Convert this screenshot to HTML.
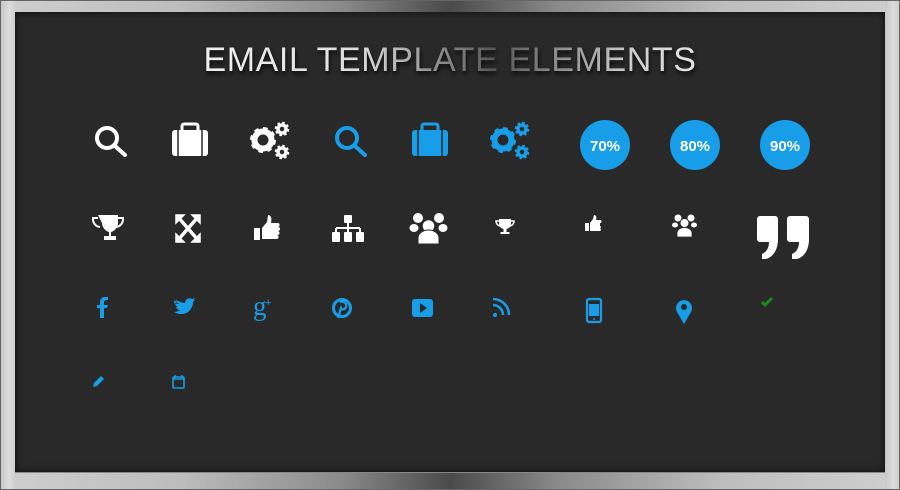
<!DOCTYPE html>
<html><head><meta charset="utf-8"><style>
html,body{margin:0;padding:0;width:900px;height:490px;overflow:hidden;background:#555}
.frame{position:absolute;left:0;top:0;width:900px;height:490px;
background:linear-gradient(90deg,#cfcfcf 0%,#bdbdbd 20%,#8a8a8a 38%,#4a4a4a 50%,#8a8a8a 62%,#bdbdbd 80%,#cfcfcf 100%);}
.frame:before{content:"";position:absolute;left:0;top:0;right:0;bottom:0;box-shadow:inset 0 0 0 1px #666;}
.side{position:absolute;top:1px;bottom:1px;width:14px;background:linear-gradient(90deg,#c8c8c8,#dcdcdc 60%,#cfcfcf)}
.panel{position:absolute;left:15px;top:12px;width:870px;height:460px;background:#292929;
box-shadow:inset 0 0 8px rgba(0,0,0,.7);border-bottom:1px solid #888}
.title{position:absolute;left:0;width:900px;top:41px;text-align:center;font-family:"Liberation Sans",sans-serif;
font-size:34px;letter-spacing:0.6px;font-weight:normal;
background:linear-gradient(90deg,#eee 25%,#ddd 40%,#555 55%,#ccc 70%,#eee 80%);-webkit-background-clip:text;background-clip:text;color:transparent;
filter:drop-shadow(1px 3px 2px rgba(0,0,0,.8))}
svg{position:absolute;left:0;top:0}
.pct{font-family:"Liberation Sans",sans-serif;font-weight:bold;font-size:15px;fill:#fff}
</style></head><body>
<div class="frame"><div class="side" style="left:1px"></div><div class="side" style="right:1px"></div></div>
<div class="panel"></div>
<div class="title">EMAIL TEMPLATE ELEMENTS</div>
<svg width="900" height="490" viewBox="0 0 900 490">
<!-- row 1 -->
<g fill="none" stroke="#fff" stroke-width="4" stroke-linecap="round"><circle cx="107" cy="138" r="10"/><line x1="115" y1="146" x2="125" y2="155"/></g>
<g fill="#fff"><rect x="172" y="130" width="36" height="26" rx="3"/><rect x="182" y="124" width="16" height="8" rx="2" fill="none" stroke="#fff" stroke-width="3"/></g>
<g stroke="#292929" stroke-width="1.5"><line x1="178" y1="130" x2="178" y2="156"/><line x1="202" y1="130" x2="202" y2="156"/></g>
<g>
<circle cx="263" cy="140" r="8.5" fill="none" stroke="#fff" stroke-width="6"/>
<circle cx="263" cy="140" r="11" fill="none" stroke="#fff" stroke-width="4" stroke-dasharray="4.3 4.3"/>
<circle cx="282" cy="129" r="4" fill="none" stroke="#fff" stroke-width="3.5"/>
<circle cx="282" cy="129" r="6" fill="none" stroke="#fff" stroke-width="2.5" stroke-dasharray="2.5 2.2"/>
<circle cx="282" cy="152" r="4" fill="none" stroke="#fff" stroke-width="3.5"/>
<circle cx="282" cy="152" r="6" fill="none" stroke="#fff" stroke-width="2.5" stroke-dasharray="2.5 2.2"/>
</g>
<g fill="none" stroke="#189ee8" stroke-width="4" stroke-linecap="round"><circle cx="347" cy="138" r="10"/><line x1="355" y1="146" x2="365" y2="155"/></g>
<g fill="#189ee8"><rect x="412" y="130" width="36" height="26" rx="3"/><rect x="422" y="124" width="16" height="8" rx="2" fill="none" stroke="#189ee8" stroke-width="3"/></g>
<g stroke="#292929" stroke-width="1.5"><line x1="418" y1="130" x2="418" y2="156"/><line x1="442" y1="130" x2="442" y2="156"/></g>
<g>
<circle cx="503" cy="140" r="8.5" fill="none" stroke="#189ee8" stroke-width="6"/>
<circle cx="503" cy="140" r="11" fill="none" stroke="#189ee8" stroke-width="4" stroke-dasharray="4.3 4.3"/>
<circle cx="522" cy="129" r="4" fill="none" stroke="#189ee8" stroke-width="3.5"/>
<circle cx="522" cy="129" r="6" fill="none" stroke="#189ee8" stroke-width="2.5" stroke-dasharray="2.5 2.2"/>
<circle cx="522" cy="152" r="4" fill="none" stroke="#189ee8" stroke-width="3.5"/>
<circle cx="522" cy="152" r="6" fill="none" stroke="#189ee8" stroke-width="2.5" stroke-dasharray="2.5 2.2"/>
</g>
<circle cx="605" cy="145" r="25" fill="#189ee8"/><text class="pct" x="605" y="151" text-anchor="middle">70%</text>
<circle cx="695" cy="145" r="25" fill="#189ee8"/><text class="pct" x="695" y="151" text-anchor="middle">80%</text>
<circle cx="785" cy="145" r="25" fill="#189ee8"/><text class="pct" x="785" y="151" text-anchor="middle">90%</text>
<!-- row 2 -->
<g fill="#fff">
<path d="M98 215h20v8a10 10 0 0 1-7 9v4h5v4h-12v-4h5v-4a10 10 0 0 1-7-9z"/>
<path d="M98 218h-5a8 8 0 0 0 7 9" fill="none" stroke="#fff" stroke-width="2"/>
<path d="M118 218h5a8 8 0 0 1-7 9" fill="none" stroke="#fff" stroke-width="2"/>
</g>
<g stroke="#fff" stroke-width="3.5" fill="#fff"><line x1="178" y1="217" x2="198" y2="240"/><line x1="198" y1="217" x2="178" y2="240"/>
<path d="M176 215h8l-8 8z M200 215h-8l8 8z M176 242h8l-8-8z M200 242h-8l8-8z" stroke-width="1.5"/></g>
<g fill="#fff"><rect x="254" y="228" width="6" height="12"/><path d="M262 228l5-6 1-7c3 0 4 3 3 8h6a2 2 0 0 1 1 4 2 2 0 0 1 0 4 2 2 0 0 1-1 4 2 2 0 0 1-1 4h-14z"/></g>
<g fill="#fff"><rect x="344" y="215" width="8" height="8" rx="1"/><path d="M348 223v5M336 228h24M336 228v4M348 228v4M360 228v4" stroke="#fff" stroke-width="2"/>
<rect x="332" y="232" width="8" height="10" rx="1"/><rect x="344" y="232" width="8" height="10" rx="1"/><rect x="356" y="232" width="8" height="10" rx="1"/></g>
<g fill="#fff"><circle cx="418" cy="218" r="5"/><circle cx="439" cy="218" r="5"/><ellipse cx="414" cy="228" rx="4.5" ry="4"/><ellipse cx="443" cy="228" rx="4.5" ry="4"/>
<circle cx="428.5" cy="226" r="6.5" stroke="#292929" stroke-width="1.5"/><path d="M418 244v-6a10.5 8 0 0 1 21 0v6z" stroke="#292929" stroke-width="1"/></g>
<g fill="#fff"><path d="M499 219h12v5a6 6 0 0 1-4.5 5v3h3v2h-9v-2h3v-3a6 6 0 0 1-4.5-5z"/><path d="M499 221h-3a5 5 0 0 0 4 5M511 221h3a5 5 0 0 1-4 5" fill="none" stroke="#fff" stroke-width="1.5"/></g>
<g fill="#fff"><rect x="585" y="223" width="4" height="8"/><path d="M590 223l3-4 1-4c2 0 3 2 2 5h4a1.5 1.5 0 0 1 0 3v3a1.3 1.3 0 0 1 0 2.5 1.3 1.3 0 0 1-1 2.5h-9z"/></g>
<g fill="#fff"><circle cx="678" cy="218" r="3.5"/><circle cx="691" cy="218" r="3.5"/><ellipse cx="675" cy="225" rx="3" ry="2.5"/><ellipse cx="694" cy="225" rx="3" ry="2.5"/>
<circle cx="684.5" cy="223" r="4.5" stroke="#292929" stroke-width="1"/><path d="M677 237v-4a7.5 5.5 0 0 1 15 0v4z" stroke="#292929" stroke-width="0.8"/></g>
<g fill="#fff"><path d="M760 216h15a3 3 0 0 1 3 3v20c0 11-5 18-12 20h-4v-5c5-2 7-7 7-12h-9a3 3 0 0 1-3-3v-20a3 3 0 0 1 3-3z"/>
<path d="M790 216h16a3 3 0 0 1 3 3v20c0 11-5 18-12 20h-5v-5c5-2 7-7 7-12h-9a3 3 0 0 1-3-3v-20a3 3 0 0 1 3-3z"/></g>
<!-- row 3 -->
<path d="M100 318v-10h-3v-3h3v-3c0-3 2-5 5-5h3v3h-2c-1 0-2 1-2 2v3h4l-1 3h-3v10z" fill="#189ee8"/>
<path d="M174 303c2 1 4 1 5 1-2-1-3-3-3-4 2 1 6 3 9 3 0-4 4-6 7-4 1 0 2-1 3-1-1 1-1 2-2 2h2l-2 2c0 7-6 13-13 12-2 0-4-1-6-2 2 0 5-1 6-2-2 0-3-1-4-3h2c-2-1-3-2-3-4h2c-1-1-2-2-2-4z" fill="#189ee8"/>
<text x="253" y="315" font-family="Liberation Serif,serif" font-size="27" fill="#189ee8">g</text><text x="265" y="306" font-family="Liberation Sans,sans-serif" font-size="11" fill="#189ee8">+</text>
<circle cx="342" cy="308" r="8.5" fill="none" stroke="#189ee8" stroke-width="3"/><path d="M340 302c5-1 7 2 6 5-1 3-4 3-5 1l-3 10" fill="none" stroke="#189ee8" stroke-width="2.2"/>
<rect x="412" y="299" width="21" height="18" rx="3" fill="#189ee8"/><path d="M420 303v10l7-5z" fill="#292929"/>
<g fill="#189ee8"><circle cx="495" cy="315" r="2"/><path d="M493 305a10 10 0 0 1 10 10" fill="none" stroke="#189ee8" stroke-width="2.5"/><path d="M493 299a16 16 0 0 1 16 16" fill="none" stroke="#189ee8" stroke-width="2.5"/></g>
<rect x="587" y="299" width="14" height="23" rx="2" fill="none" stroke="#189ee8" stroke-width="2.2"/><rect x="589" y="304" width="10" height="12" fill="#189ee8"/><circle cx="594" cy="319" r="1" fill="#189ee8"/>
<path d="M684 324l-7-12a8 8 0 1 1 14 0z" fill="#189ee8"/><circle cx="684" cy="307" r="3" fill="#292929"/>
<path d="M762 302l3 3 7-7" fill="none" stroke="#1a8a1a" stroke-width="3"/>
<!-- row 4 -->
<path d="M93 387l1-4 7-7 3 3-7 7z" fill="#189ee8"/>
<rect x="173" y="377" width="11" height="11" rx="1" fill="none" stroke="#189ee8" stroke-width="1.6"/><path d="M175 375v3M182 375v3M173 379h11" stroke="#189ee8" stroke-width="1.4"/>
</svg>
</body></html>
